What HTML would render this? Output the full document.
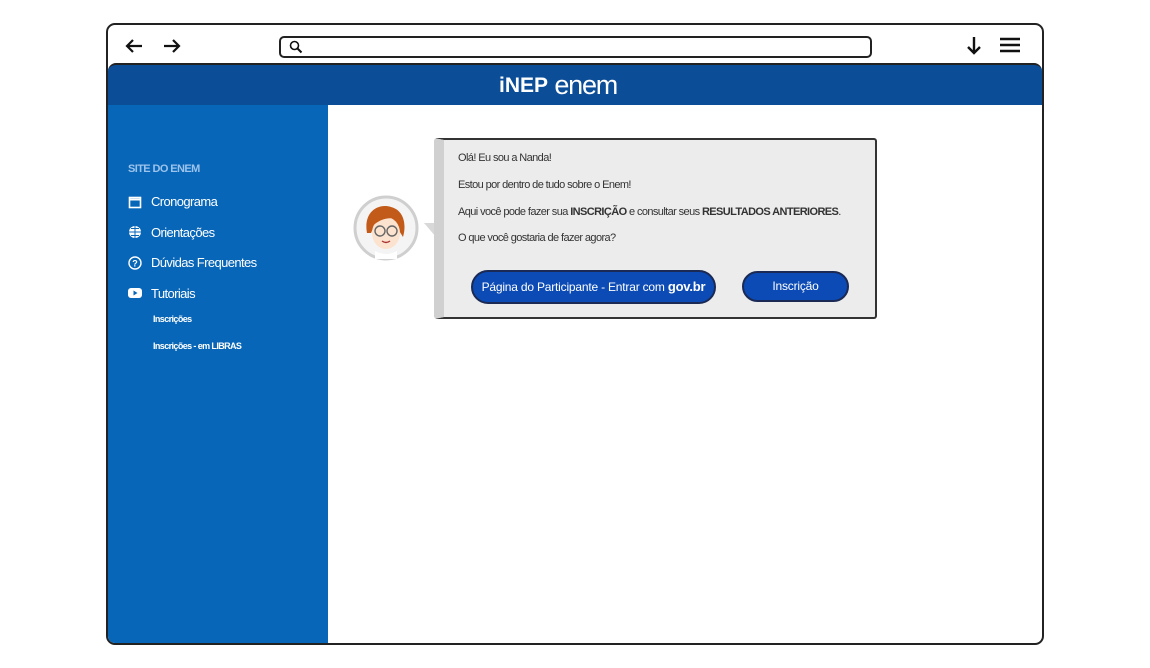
<!DOCTYPE html>
<html><head><meta charset="utf-8"><style>
*{margin:0;padding:0;box-sizing:border-box}
body{width:1150px;height:668px;background:#fff;position:relative;font-family:"Liberation Sans",sans-serif;overflow:hidden}
.frame{position:absolute;left:106px;top:23px;width:938px;height:622px;border:2px solid #222;border-radius:9px;overflow:hidden;background:#fff}
.hdr{position:absolute;left:0;top:38px;width:100%;height:42px;background:#0c4d98;border-top:2px solid #222;border-radius:8px 8px 0 0}
.side{position:absolute;left:0;top:80px;width:220px;height:540px;background:#0766b8}
.search{position:absolute;left:171px;top:11px;width:593px;height:22px;border:2px solid #222;border-radius:5px}
.s{position:absolute;color:#fff;font-size:13px;letter-spacing:-0.6px}
.dlg{position:absolute;left:326px;top:113px;width:443px;height:181px;background:#ececec;border:2px solid #333;border-radius:3px;border-left:10px solid #d0d0d0}
.dlg p{position:absolute;left:14px;font-size:11px;color:#333;letter-spacing:-0.6px}
.btn{position:absolute;background:#0c4bb5;border:2px solid #1a2a55;border-radius:17px;color:#fff;font-size:12px;text-align:center;line-height:29px;letter-spacing:-0.2px}
</style></head><body>
<div class="frame">
<svg style="position:absolute;left:16px;top:12px" width="64" height="18" viewBox="0 0 64 18"><path d="M18 9H3M9 3L3 9l6 6" stroke="#111" stroke-width="2.2" fill="none"/><path d="M40 9h15M49 3l6 6-6 6" stroke="#111" stroke-width="2.2" fill="none"/></svg>
<div class="search"><svg style="position:absolute;left:8px;top:2px" width="14" height="14" viewBox="0 0 14 14"><circle cx="5.5" cy="5.5" r="4" stroke="#111" stroke-width="1.6" fill="none"/><path d="M8.5 8.5l4 4" stroke="#111" stroke-width="2"/></svg></div>
<svg style="position:absolute;left:856px;top:10px" width="60" height="22" viewBox="0 0 60 22"><path d="M10 2v16M4 12l6 6 6-6" stroke="#111" stroke-width="2.4" fill="none"/><path d="M36 4h20M36 10h20M36 16h20" stroke="#111" stroke-width="2.6"/></svg>
<div class="hdr"><div style="position:absolute;left:391px;top:5px;color:#fff;font-size:27px;letter-spacing:-1.2px;line-height:30px"><b style="font-size:21px;letter-spacing:0;vertical-align:2px">iNEP</b> enem</div></div>
<div class="side">
<div class="s" style="left:20px;top:58px;font-size:11px;color:#9cc3ec;font-weight:bold">SITE DO ENEM</div>
<svg style="position:absolute;left:20px;top:90px" width="14" height="14" viewBox="0 0 14 14"><rect x="1.5" y="2.5" width="11" height="10" fill="none" stroke="#fff" stroke-width="1.6"/><path d="M1.5 4.5h11" stroke="#fff" stroke-width="2"/></svg>
<div class="s" style="left:43px;top:89px">Cronograma</div>
<svg style="position:absolute;left:20px;top:120px" width="14" height="14" viewBox="0 0 14 14"><circle cx="7" cy="7" r="6" fill="#fff"/><path d="M1 7h12M7 1v12M3 3.5h8M3 10.5h8" stroke="#0766b8" stroke-width="1"/></svg>
<div class="s" style="left:43px;top:120px">Orientações</div>
<svg style="position:absolute;left:20px;top:151px" width="14" height="14" viewBox="0 0 14 14"><circle cx="7" cy="7" r="6" fill="none" stroke="#fff" stroke-width="1.4"/><text x="7" y="10.5" font-size="9" fill="#fff" text-anchor="middle" font-family="Liberation Sans" font-weight="bold">?</text></svg>
<div class="s" style="left:43px;top:150px">Dúvidas Frequentes</div>
<svg style="position:absolute;left:20px;top:182px" width="14" height="12" viewBox="0 0 14 12"><rect x="0" y="1" width="14" height="10" rx="3" fill="#fff"/><path d="M5.5 3.5v5l4-2.5z" fill="#0766b8"/></svg>
<div class="s" style="left:43px;top:181px">Tutoriais</div>
<div class="s" style="left:45px;top:209px;font-size:9px;font-weight:bold">Inscrições</div>
<div class="s" style="left:45px;top:236px;font-size:9px;font-weight:bold">Inscrições - em LIBRAS</div>
</div>
<svg style="position:absolute;left:245px;top:170px" width="66" height="66" viewBox="0 0 66 66"><circle cx="33" cy="33" r="31" fill="#f4f4f4" stroke="#cfcfcf" stroke-width="3"/><path d="M14 38c-4-22 12-30 24-26 12 3 16 16 12 30-4-6-8-14-12-16-8 2-16 2-20 12z" fill="#c25a1a"/><ellipse cx="33" cy="38" rx="14" ry="16" fill="#fbe3cf"/><path d="M17 34c4-12 14-16 26-10-8-2-18 0-26 10z" fill="#c25a1a"/><circle cx="27" cy="36" r="5" fill="none" stroke="#666" stroke-width="1.4"/><circle cx="39" cy="36" r="5" fill="none" stroke="#666" stroke-width="1.4"/><path d="M29 46q4 3 8 0" stroke="#a33" stroke-width="1.4" fill="none"/><path d="M22 56q11 6 22 0v8H22z" fill="#fff"/></svg>
<svg style="position:absolute;left:316px;top:198px" width="12" height="14"><path d="M0 0h12v14z" fill="#d8d8d8"/></svg>
<div class="dlg">
<p style="top:12px">Olá! Eu sou a Nanda!</p>
<p style="top:39px">Estou por dentro de tudo sobre o Enem!</p>
<p style="top:66px">Aqui você pode fazer sua <b>INSCRIÇÃO</b> e consultar seus <b>RESULTADOS ANTERIORES</b>.</p>
<p style="top:92px">O que você gostaria de fazer agora?</p>
<div class="btn" style="left:27px;top:130px;width:245px;height:34px;line-height:30px">Página do Participante - Entrar com <b style="font-size:13px">gov.br</b></div>
<div class="btn" style="left:298px;top:131px;width:107px;height:31px;line-height:27px">Inscrição</div>
</div>
</div>
</body></html>
